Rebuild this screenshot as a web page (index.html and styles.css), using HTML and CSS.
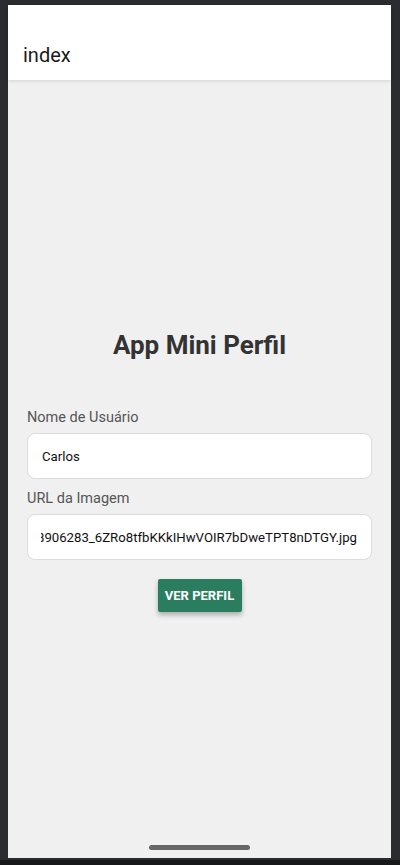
FILE: index.html
```html
<!DOCTYPE html>
<html lang="pt">
<head>
<meta charset="utf-8">
<title>index</title>
<link rel="stylesheet" href="styles.css">
</head>
<body>
<div class="device">
  <div class="screen">
    <header class="appbar"><span class="appbar-title">index</span></header>
    <main class="content">
      <h1 class="title">App Mini Perfil</h1>
      <div class="field">
        <label class="label">Nome de Usuário</label>
        <div class="input"><div class="input-inner"><span class="input-text">Carlos</span></div></div>
      </div>
      <div class="field">
        <label class="label">URL da Imagem</label>
        <div class="input"><div class="input-inner input-scrolled"><span class="input-text">https://i.pinimg.com/originals/ab/cd/1738906283_6ZRo8tfbKKkIHwVOIR7bDweTPT8nDTGY.jpg</span></div></div>
      </div>
      <div class="actions">
        <button class="btn">VER PERFIL</button>
      </div>
    </main>
    <div class="home-indicator"></div>
  </div>
</div>
</body>
</html>
```
FILE: styles.css
```css
* { box-sizing: border-box; }
html, body {
  margin: 0;
  padding: 0;
  width: 400px;
  height: 865px;
  background: #17181a;
  font-family: Roboto, "Noto Sans", sans-serif;
  overflow: hidden;
}
.device {
  height: 860px;
  background: #2b2c30;
  padding: 5px 9px 2px 8px;
}
.screen {
  position: relative;
  height: 853px;
  background: #f0f0f0;
  display: flex;
  flex-direction: column;
}
.appbar {
  height: 75px;
  background: #ffffff;
  display: flex;
  align-items: flex-end;
  padding: 0 0 13px 15px;
  box-shadow: 0 1px 4px rgba(0,0,0,0.12);
  position: relative;
  z-index: 1;
}
.appbar-title {
  font-size: 20px;
  font-weight: 400;
  color: #1a1a1a;
  line-height: 24px;
}
.content {
  flex: 1;
  display: flex;
  flex-direction: column;
  justify-content: center;
  padding: 4px 19px 0 19px;
}
.title {
  margin: 0 0 49px 0;
  text-align: center;
  font-size: 26px;
  line-height: 30px;
  font-weight: 700;
  color: #333333;
}
.field {
  display: flex;
  flex-direction: column;
  margin-bottom: 11px;
}
.label {
  font-size: 14.5px;
  line-height: 18px;
  color: #555555;
  margin-bottom: 6px;
}
.input {
  height: 46px;
  background: #ffffff;
  border: 1px solid #dcdcdc;
  border-radius: 8px;
  display: flex;
  align-items: center;
  padding: 0 14px 0 13px;
}
.input-inner {
  flex: 1;
  display: flex;
  overflow: hidden;
  white-space: nowrap;
  padding-left: 1px;
}
.input-scrolled {
  justify-content: flex-end;
  padding-left: 0;
}
.input-text {
  font-size: 13.2px;
  color: #111111;
  flex-shrink: 0;
}
.actions {
  display: flex;
  justify-content: center;
  margin-top: 8px;
}
.btn {
  height: 33px;
  width: 84px;
  padding: 0;
  border: none;
  border-radius: 2px;
  background: #2a7d5f;
  color: #ffffff;
  font-family: Roboto, "Noto Sans", sans-serif;
  font-size: 13px;
  font-weight: 700;
  box-shadow: 0 3px 5px rgba(0,0,0,0.28);
}
.home-indicator {
  position: absolute;
  left: 141px;
  bottom: 8px;
  width: 101px;
  height: 5px;
  border-radius: 3px;
  background: #666666;
}
```
